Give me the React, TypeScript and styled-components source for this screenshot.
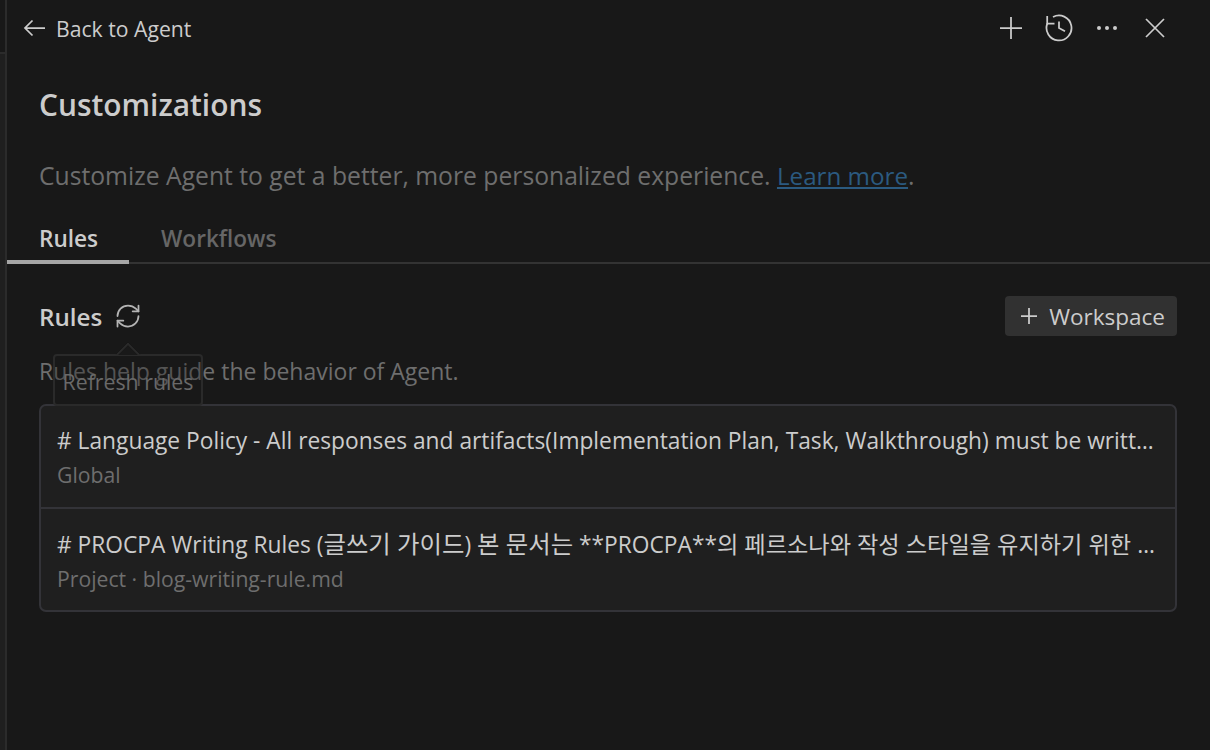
import React from 'react';
import styled, { createGlobalStyle } from 'styled-components';
import { RefreshCw } from 'lucide-react';

const GlobalStyle = createGlobalStyle`
  html, body {
    margin: 0;
    height: 100%;
    background: #181818;
  }
  body {
    font-family: 'Open Sans', 'Noto Sans CJK KR', sans-serif;
    overflow: hidden;
  }
`;

const Page = styled.div`
  display: flex;
  width: 1210px;
  height: 750px;
  background: #181818;
`;

const SideStrip = styled.div`
  width: 5px;
  flex-shrink: 0;
  background: #1f1f1f;
  border-right: 2px solid #2b2b2b;
`;

const StripHead = styled.div`
  height: 52px;
  background: #181818;
  border-bottom: 2px solid #2b2b2b;
`;

const Main = styled.main`
  flex: 1;
  min-width: 0;
  display: flex;
  flex-direction: column;
`;

const TopBar = styled.header`
  height: 56px;
  display: flex;
  align-items: center;
  justify-content: space-between;
  padding: 0 41px 0 14px;
`;

const BackLink = styled.div`
  display: flex;
  align-items: center;
  gap: 7px;
  color: #cccccc;
  font-size: 21.2px;
`;

const TopActions = styled.div`
  display: flex;
  align-items: center;
  gap: 20px;
  color: #cccccc;
`;

const Icon = styled.svg`
  display: block;
  width: 28px;
  height: 28px;
  fill: none;
  stroke: currentColor;
  stroke-width: 1.75;
`;

const Heading = styled.h1`
  margin: 30px 0 0 32px;
  color: #cccccc;
  font-size: 29.9px;
  line-height: 38px;
  font-weight: 600;
`;

const Description = styled.p`
  margin: 36px 0 0 32px;
  color: #6e6e6e;
  font-size: 24.7px;
  line-height: 32px;
`;

const LearnMore = styled.a`
  color: #2b5a80;
  font-size: 24.2px;
  text-decoration: underline;
`;

const Tabs = styled.nav`
  margin-top: 31px;
  display: flex;
  height: 41px;
  box-sizing: border-box;
  border-bottom: 2px solid #333333;
`;

const Tab = styled.div<{ $active?: boolean }>`
  width: ${(p) => (p.$active ? '122px' : 'auto')};
  padding-left: 32px;
  box-sizing: border-box;
  height: 41px;
  border-bottom: 4px solid ${(p) => (p.$active ? '#a6a6a6' : 'transparent')};
  color: ${(p) => (p.$active ? '#cccccc' : '#666666')};
  font-size: 22.6px;
  line-height: 32px;
  font-weight: 600;
`;

const Section = styled.section`
  position: relative;
  padding: 32px 33px 0 32px;
`;

const SectionHeader = styled.div`
  display: flex;
  align-items: center;
  justify-content: space-between;
  height: 40px;
`;

const SectionTitle = styled.div`
  display: flex;
  align-items: center;
  gap: 12px;
  color: #cccccc;
  font-size: 24.2px;
  font-weight: 600;
`;

const RefreshIcon = styled(RefreshCw)`
  color: #b4b4b4;
`;

const AddButton = styled.button`
  display: flex;
  align-items: center;
  gap: 6px;
  height: 40px;
  padding: 0 12px 0 10px;
  border: 0;
  border-radius: 4px;
  background: #313131;
  color: #cccccc;
  font: inherit;
  font-size: 22.5px;
`;

const Hint = styled.p`
  margin: 19px 0 0;
  color: #6e6e6e;
  font-size: 23px;
  line-height: 32px;
`;

const RuleList = styled.div`
  margin-top: 17px;
  border: 2px solid #333338;
  border-radius: 7px;
  background: #1f1f1f;
`;

const RuleItem = styled.div`
  height: 101px;
  box-sizing: border-box;
  padding: 19px 16px 0;
  & + & {
    border-top: 2px solid #333338;
    height: 103px;
  }
`;

const RuleTitle = styled.div`
  color: #cccccc;
  font-size: 22.75px;
  line-height: 32px;
  white-space: nowrap;
  overflow: hidden;
  text-overflow: ellipsis;
`;

const Hangul = styled.span<{ $size: number }>`
  font-size: ${(p) => p.$size}px;
`;

const RuleMeta = styled.div`
  color: #6e6e6e;
  font-size: 21.2px;
  line-height: 32px;
  margin-top: 2px;
`;

const Tooltip = styled.div`
  position: absolute;
  left: 46px;
  top: 90px;
  width: 150px;
  height: 52px;
  box-sizing: border-box;
  padding-top: 3px;
  display: flex;
  align-items: center;
  justify-content: center;
  border: 2px solid #2a2a2a;
  border-radius: 4px;
  background: rgba(28, 28, 28, 0.3);
  color: #696969;
  font-size: 21.3px;

  &::before {
    content: '';
    position: absolute;
    top: -10px;
    left: 64px;
    width: 18px;
    height: 18px;
    box-sizing: border-box;
    transform: rotate(45deg);
    clip-path: polygon(0 0, 100% 0, 0 100%);
    border-left: 2px solid #2a2a2a;
    border-top: 2px solid #2a2a2a;
    background: #191919;
  }
`;

export default function App() {
  return (
    <Page>
      <GlobalStyle />
      <SideStrip>
        <StripHead />
      </SideStrip>
      <Main>
        <TopBar>
          <BackLink>
            <Icon viewBox="0 0 28 28">
              <path d="M4 14H24M11.5 6.5L4 14l7.5 7.5" />
            </Icon>
            Back to Agent
          </BackLink>
          <TopActions>
            <Icon viewBox="0 0 28 28">
              <path d="M3 14H25M14 3V25" />
            </Icon>
            <Icon viewBox="0 0 28 28">
              <path d="M2.2 2V9.5H9.5" />
              <path d="M2.4 9.3A12.5 12.5 0 1 0 8 3" />
              <path d="M14 7.5V14L20 17.2" />
            </Icon>
            <Icon viewBox="0 0 28 28">
              <circle cx="6" cy="14" r="2" fill="currentColor" stroke="none" />
              <circle cx="14" cy="14" r="2" fill="currentColor" stroke="none" />
              <circle cx="22" cy="14" r="2" fill="currentColor" stroke="none" />
            </Icon>
            <Icon viewBox="0 0 28 28">
              <path d="M5 5L23 23M23 5L5 23" />
            </Icon>
          </TopActions>
        </TopBar>
        <Heading>Customizations</Heading>
        <Description>
          Customize Agent to get a better, more personalized experience.{' '}
          <LearnMore>Learn more</LearnMore>.
        </Description>
        <Tabs>
          <Tab $active>Rules</Tab>
          <Tab>Workflows</Tab>
        </Tabs>
        <Section>
          <SectionHeader>
            <SectionTitle>
              Rules
              <RefreshIcon size={28} strokeWidth={1.5} />
            </SectionTitle>
            <AddButton>
              <Icon viewBox="0 0 28 28">
                <path d="M6 14H22M14 6V22" />
              </Icon>
              Workspace
            </AddButton>
          </SectionHeader>
          <Hint>Rules help guide the behavior of Agent.</Hint>
          <Tooltip>Refresh rules</Tooltip>
          <RuleList>
            <RuleItem>
              <RuleTitle>
                # Language Policy - All responses and artifacts(Implementation Plan, Task, Walkthrough) must be written in Korean
              </RuleTitle>
              <RuleMeta>Global</RuleMeta>
            </RuleItem>
            <RuleItem>
              <RuleTitle>
                # PROCPA Writing Rules (<Hangul $size={24.4}>글쓰기 가이드</Hangul>) <Hangul $size={24.4}>본 문서는</Hangul> **PROCPA**<Hangul $size={23.2}>의 페르소나와 작성 스타일을 유지하기 위한 규칙입니다</Hangul>
              </RuleTitle>
              <RuleMeta>Project · blog-writing-rule.md</RuleMeta>
            </RuleItem>
          </RuleList>
        </Section>
      </Main>
    </Page>
  );
}
